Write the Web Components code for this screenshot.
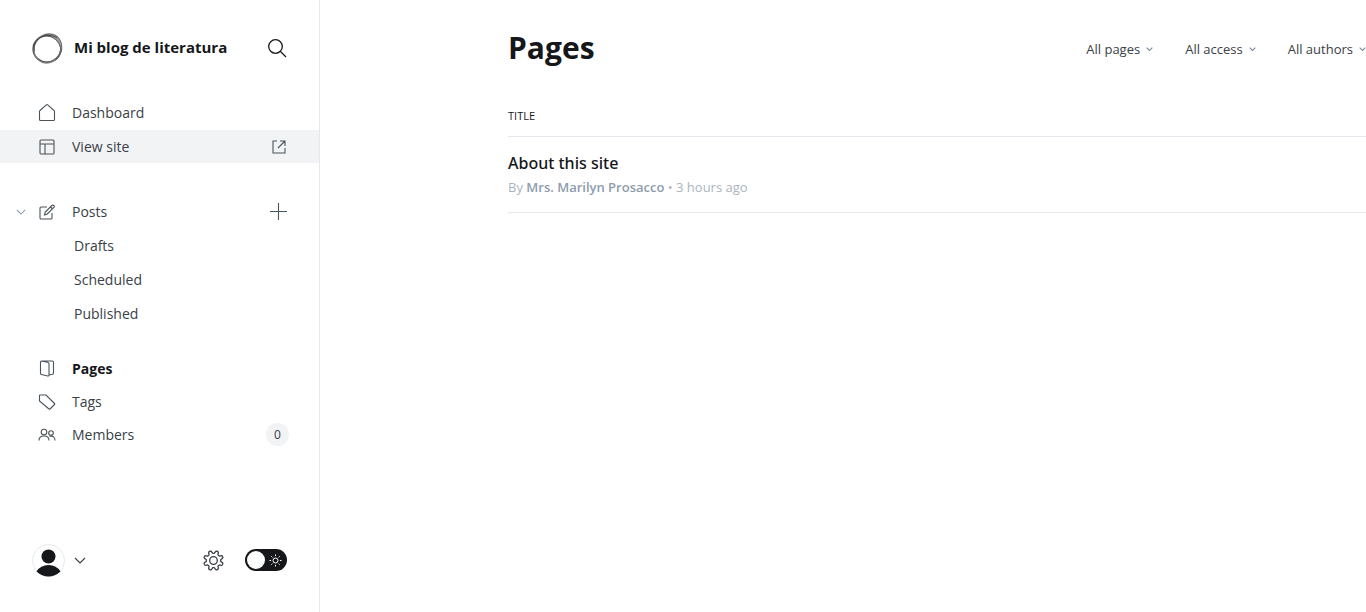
<!DOCTYPE html>
<html lang="en">
<head>
<meta charset="utf-8">
<title>Pages - Mi blog de literatura</title>
<style>
html, body { margin: 0; height: 100%; }
body { font: 14px/20px "Open Sans", "Noto Sans", sans-serif; color: #394047; background: #fff; }
</style>
</head>
<body>
<blog-admin></blog-admin>
<script>
const define = (name, html, setup) => customElements.define(name, class extends HTMLElement {
  constructor() {
    super();
    const t = document.createElement('template');
    t.innerHTML = html;
    this.attachShadow({ mode: 'open' }).append(t.content.cloneNode(true));
  }
  connectedCallback() { if (setup) setup(this, this.shadowRoot); }
});

// Eight-lobed cog: the radius swells and shrinks smoothly around the centre.
const cog = (c, base, swing) => {
  let d = '';
  for (let i = 0; i < 96; i++) {
    const a = i * Math.PI / 48, r = base + swing * Math.tanh(2.2 * Math.cos(8 * a + Math.PI));
    d += (i ? 'L' : 'M') + (c + r * Math.cos(a)).toFixed(2) + ' ' + (c + r * Math.sin(a)).toFixed(2);
  }
  return d + 'z';
};

const icons = {
  home: '<path d="M.5 7.500v8q0 1 1 1h13q1 0 1-1v-8q0-.6-.5-1L8.700.9q-.7-.5-1.400 0L1 6.500q-.5.4-.5 1z"/>',
  layout: '<rect x="1" y="1" width="14" height="14" rx="1"/><path d="M1 5h14M6 5v10"/>',
  external: '<path d="M6 2H2v12h12V9M9 2h5v5M14 2L7 9"/>',
  plus: '<path d="M8.500 0v17M0 8.500h17"/>',
  edit: '<path d="M8 3H2Q1 3 1 4v10q0 1 1 1h10q1 0 1-1V9M5.500 11l.8-3 6.500-6.500q1-.8 2 0t0 2L8.300 10zM11.500 3l2 2"/>',
  pages: '<path d="M2.500 1l6 1.300q1.500.4 1.500 1.700v11q0 1.200-1.200 1L2.500 14.500q-1-.2-1-1.200V2q0-1 1-1h11q1 0 1 1v11q0 1-1 1.200l-3.500.8"/>',
  tag: '<path d="M1 1h6l8.500 8.500q.5.5 0 1l-4.500 4.500q-.5.500-1 0L.5 7V1.500Q.5 1 1 1z"/>',
  members: '<circle cx="5" cy="5" r="2.800"/><path d="M0 13.500q0-4.500 5-4.500t5 4.500"/><circle cx="12" cy="6" r="2.300"/><path d="M10.500 9.300q5.500-1 5.500 4.200"/>',
  search: '<circle cx="7.500" cy="7.500" r="6.800"/><path d="M12.500 12.500l5.500 5.500"/>',
  chevron: '<path d="M1 1l5 5 5-5"/>',
  gear: `<path d="${cog(10.5, 8.5, 1.4)}" stroke-linejoin="round"/><circle cx="10.500" cy="10.500" r="3.800"/>`,
  sun: '<circle cx="6.500" cy="6.500" r="2.500"/><path d="M6.500.5v1.600M6.500 10.900v1.600M.5 6.500h1.600M10.900 6.500h1.600M2.300 2.300l1.100 1.100M9.600 9.600l1.100 1.100M2.300 10.700l1.100-1.100M9.600 3.400l1.100-1.100"/>',
  logo: '<ellipse cx="15" cy="16" rx="13.800" ry="13.300" stroke="#444" stroke-width="1.600"/><ellipse cx="15.500" cy="15.500" rx="14.500" ry="13" stroke="#666" transform="rotate(-45 15.500 15.500)"/><ellipse cx="15.500" cy="15.500" rx="14.800" ry="13.300" stroke="#888" transform="rotate(110 15.500 15.500)"/><path d="M13 1.800Q22-.5 26.500 4.500 31 10 29.500 18q-1.500 6-6 9 6-6 5-12.500Q26.500 5 13 1.800z" fill="#999" stroke="#555" stroke-width=".7"/><path d="M2 18Q1 9 8 4.500T25 4.500" stroke="#444"/>',
  user: '<circle cx="16.500" cy="16.500" r="16" stroke="#e5e9ed"/><circle cx="16.500" cy="12.500" r="7" fill="#15171a" stroke="none"/><path d="M4.500 27.500q4-6.500 12-6.500t12 6.500Q23 32.500 16.500 32.500T4.500 27.500z" fill="#15171a" stroke="none"/>'
};
const sizes = { home: [16, 17], layout: [16, 16], external: [16, 16], plus: [17, 17], edit: [17, 16], pages: [16, 17], tag: [16, 16], members: [17, 16], search: [19, 19], chevron: [12, 7], gear: [21, 21], sun: [13, 13], logo: [31, 31], user: [33, 33] };

define('ui-icon', `<style>
:host { display: inline-flex; flex: none; }
span { display: flex; }
svg { display: block; fill: none; stroke: currentColor; stroke-width: var(--stroke, 1); overflow: visible; }
</style><span></span>`, (el, root) => {
  const n = el.getAttribute('name'), [w, h] = sizes[n];
  const s = el.getAttribute('size') || w;
  root.querySelector('span').innerHTML = `<svg aria-hidden="true" width="${s}" height="${Math.round(s * h / w)}" viewBox="0 0 ${w} ${h}">${icons[n]}</svg>`;
});

define('nav-item', `<style>
:host { display: block; position: relative; }
a { display: flex; align-items: center; box-sizing: border-box; height: 33px; padding: 0 32px 0 38px; color: #394047; text-decoration: none; }
.lead { display: flex; justify-content: center; width: 18px; margin-right: 16px; }
.end { margin-left: auto; display: flex; }
:host([child]) a { padding-left: 74px; }
:host([child]) .lead { display: none; }
:host([hover]) a { background: #f1f3f4; }
:host([active]) a { color: #15171a; font-weight: 700; }
::slotted(ui-icon) { color: #4b535b; --stroke: 1.1; }
</style><a href="#"><span class="lead"><slot name="icon"></slot></span><slot></slot><span class="end"><slot name="end"></slot></span></a><slot name="toggle"></slot>`);

define('icon-button', `<style>
:host { display: inline-flex; }
button { display: flex; padding: 0; border: 0; background: none; color: inherit; cursor: pointer; }
</style><button><slot></slot></button>`, (el, root) => {
  root.querySelector('button').setAttribute('aria-label', el.getAttribute('label'));
});

define('night-switch', `<style>
:host { display: block; }
label { display: flex; align-items: center; position: relative; width: 42px; height: 22px; border-radius: 11px; background: #15171a; color: #fff; }
input { position: absolute; inset: 0; margin: 0; width: 100%; height: 100%; opacity: 0; }
.knob { width: 18px; height: 18px; margin: 0 4px 0 2px; border-radius: 50%; background: #fff; flex: none; }
</style><label><input type="checkbox" aria-label="Night shift"><span class="knob"></span><ui-icon name="sun"></ui-icon></label>`);

define('admin-sidebar', `<style>
:host { display: flex; flex-direction: column; box-sizing: border-box; flex: 0 0 320px; min-height: 100vh; border-right: 1px solid #e5e9ed; }
header { display: flex; align-items: center; padding: 32px; height: 32px; color: #15171a; }
header strong { margin-left: 11px; flex: 1; font-size: 15px; line-height: 20px; padding-bottom: 2px; white-space: nowrap; }
nav { flex: 1; }
ul { list-style: none; margin: 0; padding: 0; display: flex; flex-direction: column; gap: 1px; }
ul + ul { margin-top: 32px; }
ul.tight { margin-top: 22px; gap: 0; }
.toggle { position: absolute; left: 16px; top: 14px; color: #8e9cac; }
.count { display: block; min-width: 23px; height: 23px; margin-right: -2px; border-radius: 12px; background: #f1f3f4; font-size: 12px; line-height: 23px; text-align: center; }
footer { display: flex; align-items: center; padding: 24px 32px 35px; }
.user { display: flex; align-items: center; gap: 9px; }
night-switch { margin: 0 0 1px 21px; }
.gear { margin-left: auto; }
</style>
<header><ui-icon name="logo"></ui-icon><strong>Mi blog de literatura</strong><icon-button label="Search"><ui-icon name="search" style="--stroke:1.3"></ui-icon></icon-button></header>
<nav>
<ul>
<li><nav-item><ui-icon slot="icon" name="home"></ui-icon>Dashboard</nav-item></li>
<li><nav-item hover><ui-icon slot="icon" name="layout"></ui-icon>View site<ui-icon slot="end" name="external"></ui-icon></nav-item></li>
</ul>
<ul>
<li><nav-item><ui-icon slot="icon" name="edit"></ui-icon>Posts<ui-icon slot="end" name="plus"></ui-icon><icon-button slot="toggle" class="toggle" label="Collapse posts"><ui-icon name="chevron" size="10" style="--stroke:1.3"></ui-icon></icon-button></nav-item></li>
<li><nav-item child>Drafts</nav-item></li>
<li><nav-item child>Scheduled</nav-item></li>
<li><nav-item child>Published</nav-item></li>
</ul>
<ul class="tight">
<li><nav-item active><ui-icon slot="icon" name="pages"></ui-icon>Pages</nav-item></li>
<li><nav-item><ui-icon slot="icon" name="tag"></ui-icon>Tags</nav-item></li>
<li><nav-item><ui-icon slot="icon" name="members"></ui-icon>Members<span slot="end" class="count">0</span></nav-item></li>
</ul>
</nav>
<footer>
<icon-button label="Account"><span class="user"><ui-icon name="user"></ui-icon><ui-icon name="chevron" style="--stroke:1.2"></ui-icon></span></icon-button>
<icon-button class="gear" label="Settings"><ui-icon name="gear" style="--stroke:1.3"></ui-icon></icon-button>
<night-switch></night-switch>
</footer>`);

define('filter-menu', `<style>
:host { display: block; }
button { display: flex; align-items: center; gap: 6px; padding: 0; border: 0; background: none; font: inherit; font-size: 13px; line-height: 20px; color: #394047; white-space: nowrap; }
ui-icon { color: #7c8b9a; --stroke: 2; }
</style><button aria-haspopup="listbox"><slot></slot><ui-icon name="chevron" size="7"></ui-icon></button>`);

define('page-list', `<style>
:host { display: block; }
table { width: 100%; border-collapse: collapse; }
th { padding: 0 0 10px; border-bottom: 1px solid #e5e9ed; font-size: 11px; line-height: 20px; font-weight: 500; text-align: left; color: #15171a; }
td { padding: 15px 0; border-bottom: 1px solid #e5e9ed; }
a { display: block; font-size: 16px; line-height: 22px; font-weight: 500; font-family: "Noto Sans", sans-serif; color: #15171a; text-decoration: none; }
p { margin: 3px 0 0; font-size: 13px; line-height: 20px; color: #abb4be; }
b { font-weight: 600; color: #8e9cac; }
</style><table><thead><tr><th scope="col">TITLE</th></tr></thead><tbody><tr><td><a href="#">About this site</a><p>By <b>Mrs. Marilyn Prosacco</b> • 3 hours ago</p></td></tr></tbody></table>`);

define('pages-screen', `<style>
:host { display: block; flex: 1; min-width: 0; box-sizing: border-box; padding: 24px 0 0 188px; }
header { display: flex; align-items: center; justify-content: space-between; height: 48px; margin-bottom: 34px; }
h1 { margin: 0; font-size: 30px; line-height: 48px; font-weight: 700; color: #15171a; }
.filters { display: flex; gap: 32px; padding-top: 2px; }
</style>
<header><h1>Pages</h1><div class="filters"><filter-menu>All pages</filter-menu><filter-menu>All access</filter-menu><filter-menu>All authors</filter-menu></div></header>
<page-list></page-list>`);

define('blog-admin', `<style>
:host { display: flex; min-height: 100vh; }
main { display: flex; flex: 1; min-width: 0; }
</style><admin-sidebar></admin-sidebar><main><pages-screen></pages-screen></main>`);
</script>
</body>
</html>
